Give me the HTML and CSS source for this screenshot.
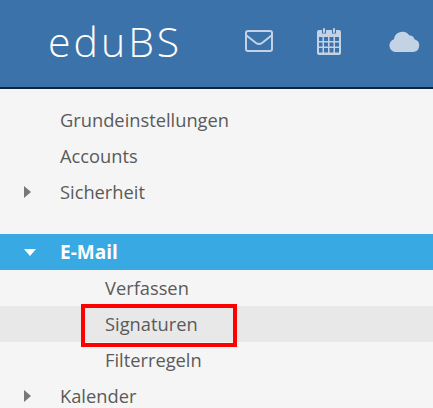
FILE: index.html
```html
<!DOCTYPE html>
<html lang="de">
<head>
  <meta charset="UTF-8" />
  <title>eduBS</title>
  <link rel="stylesheet" href="styles.css">
</head>
<body>

<header class="topbar">
  <div class="logo">eduBS</div>
  <nav class="top-icons">
    <svg class="icon-mail" width="28" height="22" viewBox="0 0 28 22" fill="none" stroke="currentColor" stroke-width="2">
      <rect x="1" y="1" width="26" height="20" rx="2" />
      <path d="M1.5 5.5 L11 13 Q14 15 17 13 L26.5 5.5" />
    </svg>
    <svg class="icon-cal" width="26" height="28" viewBox="0 0 26 28">
      <path fill="currentColor" fill-rule="evenodd" d="M3 3h3v3.5h4V3h6v3.5h4V3h3a2 2 0 0 1 2 2v21a2 2 0 0 1-2 2H3a2 2 0 0 1-2-2V5a2 2 0 0 1 2-2zM3 10v4h3.5v-4zm5 0v4h4v-4zm5.500 0v4h4v-4zm5.500 0v4h4v-4zM3 15.500v4h3.500v-4zm5 0v4h4v-4zm5.500 0v4h4v-4zm5.500 0v4h4v-4zM3 21v4.500h3.500V21zm5 0v4.500h4V21zm5.500 0v4.500h4V21zm5.500 0v4.500h4V21z" />
      <rect x="7" y="1" width="2" height="5" rx="1" fill="currentColor" />
      <rect x="17" y="1" width="2" height="5" rx="1" fill="currentColor" />
    </svg>
    <svg class="icon-cloud" width="31" height="22" viewBox="0 0 31 22">
      <path fill="currentColor" d="M7 22a6.500 6.500 0 0 1-2-12.700A8.500 8.500 0 0 1 20.500 5.500a5 5 0 0 1 5 3.800A6.500 6.500 0 0 1 24.500 22z" />
    </svg>
  </nav>
</header>

<ul class="menu">
  <li class="item">Grundeinstellungen</li>
  <li class="item">Accounts</li>
  <li class="item closed">Sicherheit</li>
  <li class="item open active">E-Mail</li>
  <li class="item sub">Verfassen</li>
  <li class="item sub hovered">Signaturen<span class="highlight"></span></li>
  <li class="item sub">Filterregeln</li>
  <li class="item closed">Kalender</li>
</ul>

</body>
</html>
```

FILE: styles.css
```css
* { box-sizing: border-box; }

html, body {
  height: 100%;
  overflow: hidden;
}

body {
  margin: 0;
  background: #f5f5f5;
  color: #5a5a5a;
  font-family: "Open Sans", "Noto Sans", sans-serif;
  font-size: 18.3px;
}

.topbar {
  display: flex;
  align-items: center;
  height: 89px;
  padding: 0 0 5px 48px;
  background: #3c72aa;
  border-bottom: 2px solid #10253d;
}

.logo {
  width: 197px;
  color: #fff;
  font-family: "Open Sans", sans-serif;
  font-size: 41px;
  font-weight: 300;
  letter-spacing: 3px;
  line-height: 1;
}

.top-icons {
  display: flex;
  align-items: center;
  gap: 43px;
  color: #c3d3e5;
}

.icon-cloud { margin-left: 4px; }

.menu {
  list-style: none;
  margin: 13px 0 0;
  padding: 0;
}

.item {
  position: relative;
  height: 36px;
  line-height: 36px;
  padding-left: 60px;
}

.closed::before {
  content: "";
  position: absolute;
  left: 24px;
  top: 12px;
  border-left: 7px solid #777;
  border-top: 6px solid transparent;
  border-bottom: 6px solid transparent;
}

.open::before {
  content: "";
  position: absolute;
  left: 24px;
  top: 15px;
  border-top: 7px solid #fff;
  border-left: 6.500px solid transparent;
  border-right: 6.500px solid transparent;
}

.active {
  margin-top: 24px;
  background: #38a9e3;
  color: #fff;
  font-size: 19px;
  font-weight: 700;
}

.sub { padding-left: 105px; }

.hovered { background: #e8e8e8; }

.highlight {
  position: absolute;
  left: 81px;
  top: -2px;
  width: 156px;
  height: 43px;
  border: 4px solid #f00;
}
```
